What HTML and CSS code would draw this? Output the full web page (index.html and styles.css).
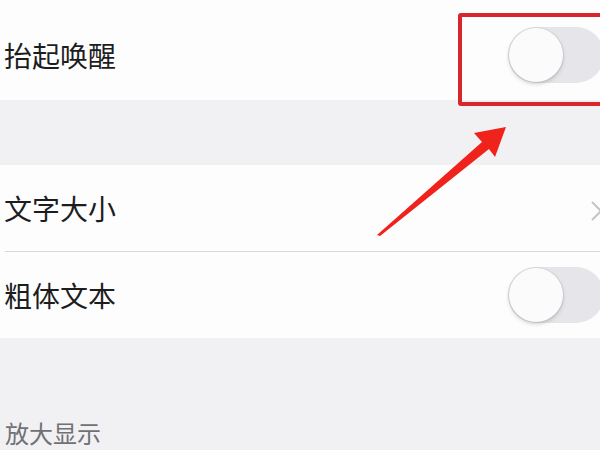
FILE: index.html
```html
<!DOCTYPE html>
<html lang="zh-CN">
<head>
    <meta charset="UTF-8">
    <meta name="viewport" content="width=device-width, initial-scale=1.0">
    <title>显示与亮度</title>
    <link rel="stylesheet" href="styles.css">
</head>
<body>
    <div class="screen">
        <!-- 抬起唤醒 -->
        <div class="group">
            <div class="row row-first">
                <span class="label">抬起唤醒</span>
                <span class="switch"><span class="knob"></span></span>
            </div>
        </div>

        <div class="spacer"></div>

        <!-- 文字设置 -->
        <div class="group">
            <div class="row">
                <span class="label">文字大小</span>
                <span class="chevron">
                    <svg width="14" height="22" viewBox="0 0 14 22"><path d="M2 2 L11 11 L2 20" fill="none" stroke="#c4c4c9" stroke-width="2"/></svg>
                </span>
            </div>
            <div class="divider"></div>
            <div class="row">
                <span class="label">粗体文本</span>
                <span class="switch"><span class="knob"></span></span>
            </div>
        </div>

        <div class="section-head">放大显示</div>

        <!-- annotation: highlight box and arrow -->
        <div class="highlight"></div>
        <svg class="arrow" width="600" height="450" viewBox="0 0 600 450">
            <polygon points="377,235 482,142 474,133 506,127 495,157 489,149 380,236" fill="#f0221c"/>
        </svg>
    </div>
</body>
</html>
```

FILE: styles.css
```css
body {
    margin: 0;
    background-color: #f1f1f3;
    font-family: "Noto Sans CJK SC", "Noto Sans", sans-serif;
}

.screen {
    position: relative;
    width: 600px;
    height: 450px;
    overflow: hidden;
    background-color: #f1f1f3;
}

.group {
    background-color: #fdfdfd;
}

.row {
    height: 86px;
    display: flex;
    align-items: center;
    justify-content: space-between;
    padding-left: 4px;
}

.row-first {
    height: 100px;
    padding-top: 10px;
    box-sizing: border-box;
}

.label {
    font-size: 28px;
    color: #1d1d1f;
    letter-spacing: 0;
}

.spacer {
    height: 65px;
}

.divider {
    height: 1px;
    margin-left: 5px;
    background-color: #d9d9dd;
}

/* switch, off state, partly cut by the right edge */
.switch {
    width: 96px;
    height: 56px;
    margin-right: -4px;
    border-radius: 28px;
    background-color: #e6e6ea;
    display: flex;
    align-items: center;
}

.knob {
    width: 54px;
    height: 54px;
    margin-left: 1px;
    border-radius: 50%;
    background-color: #fbfbfb;
    box-shadow: 0 2px 4px rgba(0, 0, 0, 0.18), 0 0 0 1px rgba(0, 0, 0, 0.05);
}

.chevron {
    display: flex;
    margin-right: -4px;
    padding-top: 6px;
}

.section-head {
    padding: 81px 0 0 5px;
    font-size: 24px;
    line-height: 1.2;
    color: #707075;
}

.highlight {
    position: absolute;
    left: 458px;
    top: 13px;
    width: 150px;
    height: 93px;
    box-sizing: border-box;
    border: 4px solid #d8262c;
    border-radius: 3px;
}

.arrow {
    position: absolute;
    left: 0;
    top: 0;
}
```
